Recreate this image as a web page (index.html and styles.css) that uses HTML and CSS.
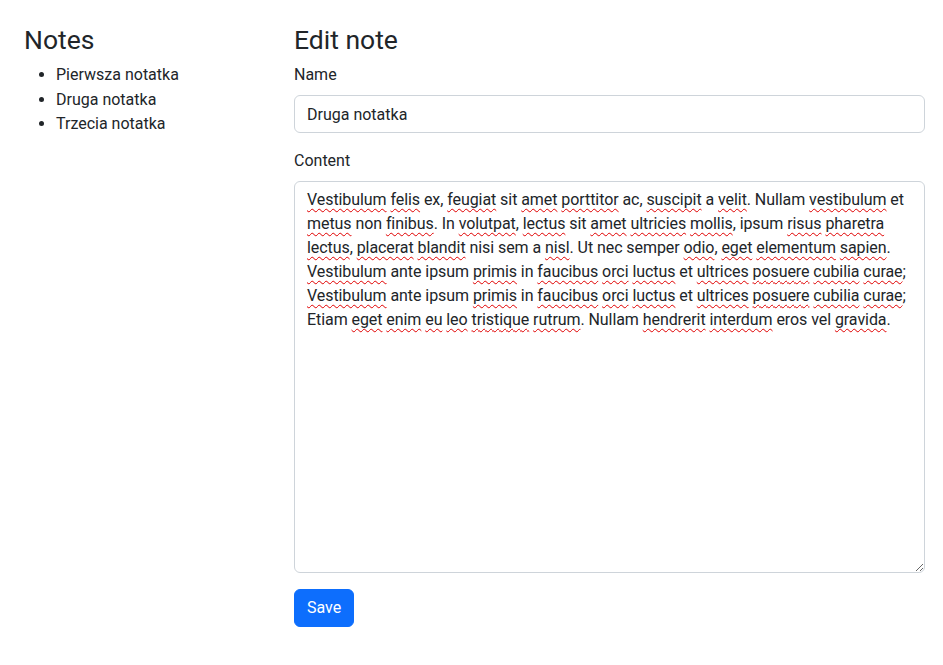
FILE: index.html
```html
<!DOCTYPE html>
<html lang="pl">
<head>
<meta charset="utf-8">
<title>Notes</title>
<link rel="stylesheet" href="styles.css">
</head>
<body>
<div class="page">
  <aside class="sidebar">
    <h3 class="heading">Notes</h3>
    <ul class="note-list">
      <li>Pierwsza notatka</li>
      <li>Druga notatka</li>
      <li>Trzecia notatka</li>
    </ul>
  </aside>
  <main class="editor">
    <h3 class="heading">Edit note</h3>
    <div class="field">
      <label class="form-label" for="name">Name</label>
      <input class="form-control" id="name" type="text" value="Druga notatka">
    </div>
    <div class="field">
      <label class="form-label">Content</label>
      <div class="form-control textarea"><span class="sp">Vestibulum</span> <span class="sp">felis</span> ex, <span class="sp">feugiat</span> sit <span class="sp">amet</span> <span class="sp">porttitor</span> ac, <span class="sp">suscipit</span> a <span class="sp">velit</span>. Nullam <span class="sp">vestibulum</span> et<br><span class="sp">metus</span> non <span class="sp">finibus</span>. In <span class="sp">volutpat</span>, <span class="sp">lectus</span> sit <span class="sp">amet</span> <span class="sp">ultricies</span> <span class="sp">mollis</span>, ipsum <span class="sp">risus</span> <span class="sp">pharetra</span><br><span class="sp">lectus</span>, <span class="sp">placerat</span> <span class="sp">blandit</span> nisi sem a <span class="sp">nisl</span>. Ut nec semper <span class="sp">odio</span>, <span class="sp">eget</span> <span class="sp">elementum</span> <span class="sp">sapien</span>.<br><span class="sp">Vestibulum</span> ante ipsum <span class="sp">primis</span> in <span class="sp">faucibus</span> <span class="sp">orci</span> <span class="sp">luctus</span> et <span class="sp">ultrices</span> <span class="sp">posuere</span> <span class="sp">cubilia</span> <span class="sp">curae</span>;<br><span class="sp">Vestibulum</span> ante ipsum <span class="sp">primis</span> in <span class="sp">faucibus</span> <span class="sp">orci</span> <span class="sp">luctus</span> et <span class="sp">ultrices</span> <span class="sp">posuere</span> <span class="sp">cubilia</span> <span class="sp">curae</span>;<br>Etiam <span class="sp">eget</span> <span class="sp">enim</span> <span class="sp">eu</span> <span class="sp">leo</span> <span class="sp">tristique</span> <span class="sp">rutrum</span>. Nullam <span class="sp">hendrerit</span> <span class="sp">interdum</span> eros vel <span class="sp">gravida</span>.</div>
    </div>
    <button class="btn" type="button">Save</button>
  </main>
</div>
</body>
</html>
```
FILE: styles.css
```css
* { box-sizing: border-box; }
html, body { margin: 0; padding: 0; background: #fff; }
body {
  font-family: "Segoe UI", Roboto, "Liberation Sans", sans-serif;
  font-size: 16px;
  line-height: 24px;
  color: #212529;
}
.page {
  display: flex;
  padding: 24px 18px 0 24px;
}
.sidebar {
  width: 270px;
  flex: none;
}
.editor {
  flex: 1;
  min-width: 0;
}
.heading {
  margin: 0 0 8px;
  font-size: 26.5px;
  line-height: 31px;
  font-weight: 400;
}
.note-list {
  margin: 0;
  padding-left: 32px;
}
.note-list li {
  line-height: 24.5px;
}
.field {
  margin-bottom: 16px;
}
.form-label {
  display: block;
  margin-bottom: 8px;
}
.form-control {
  display: block;
  width: 100%;
  height: 38px;
  padding: 6px 12px;
  font: inherit;
  line-height: 24px;
  color: #212529;
  background: #fff;
  border: 1px solid #ced4da;
  border-radius: 6px;
  outline: none;
}
.textarea {
  height: 392px;
  overflow: auto;
  resize: vertical;
  white-space: nowrap;
  letter-spacing: -0.07px;
}
.sp {
  text-decoration: underline wavy #e00000;
  text-decoration-thickness: 1px;
  text-underline-offset: 3px;
  text-decoration-skip-ink: none;
}
.btn {
  display: inline-block;
  height: 38px;
  padding: 6px 12px;
  font: inherit;
  line-height: 24px;
  color: #fff;
  background: #0d6efd;
  border: 1px solid #0d6efd;
  border-radius: 6px;
  cursor: pointer;
}
```
